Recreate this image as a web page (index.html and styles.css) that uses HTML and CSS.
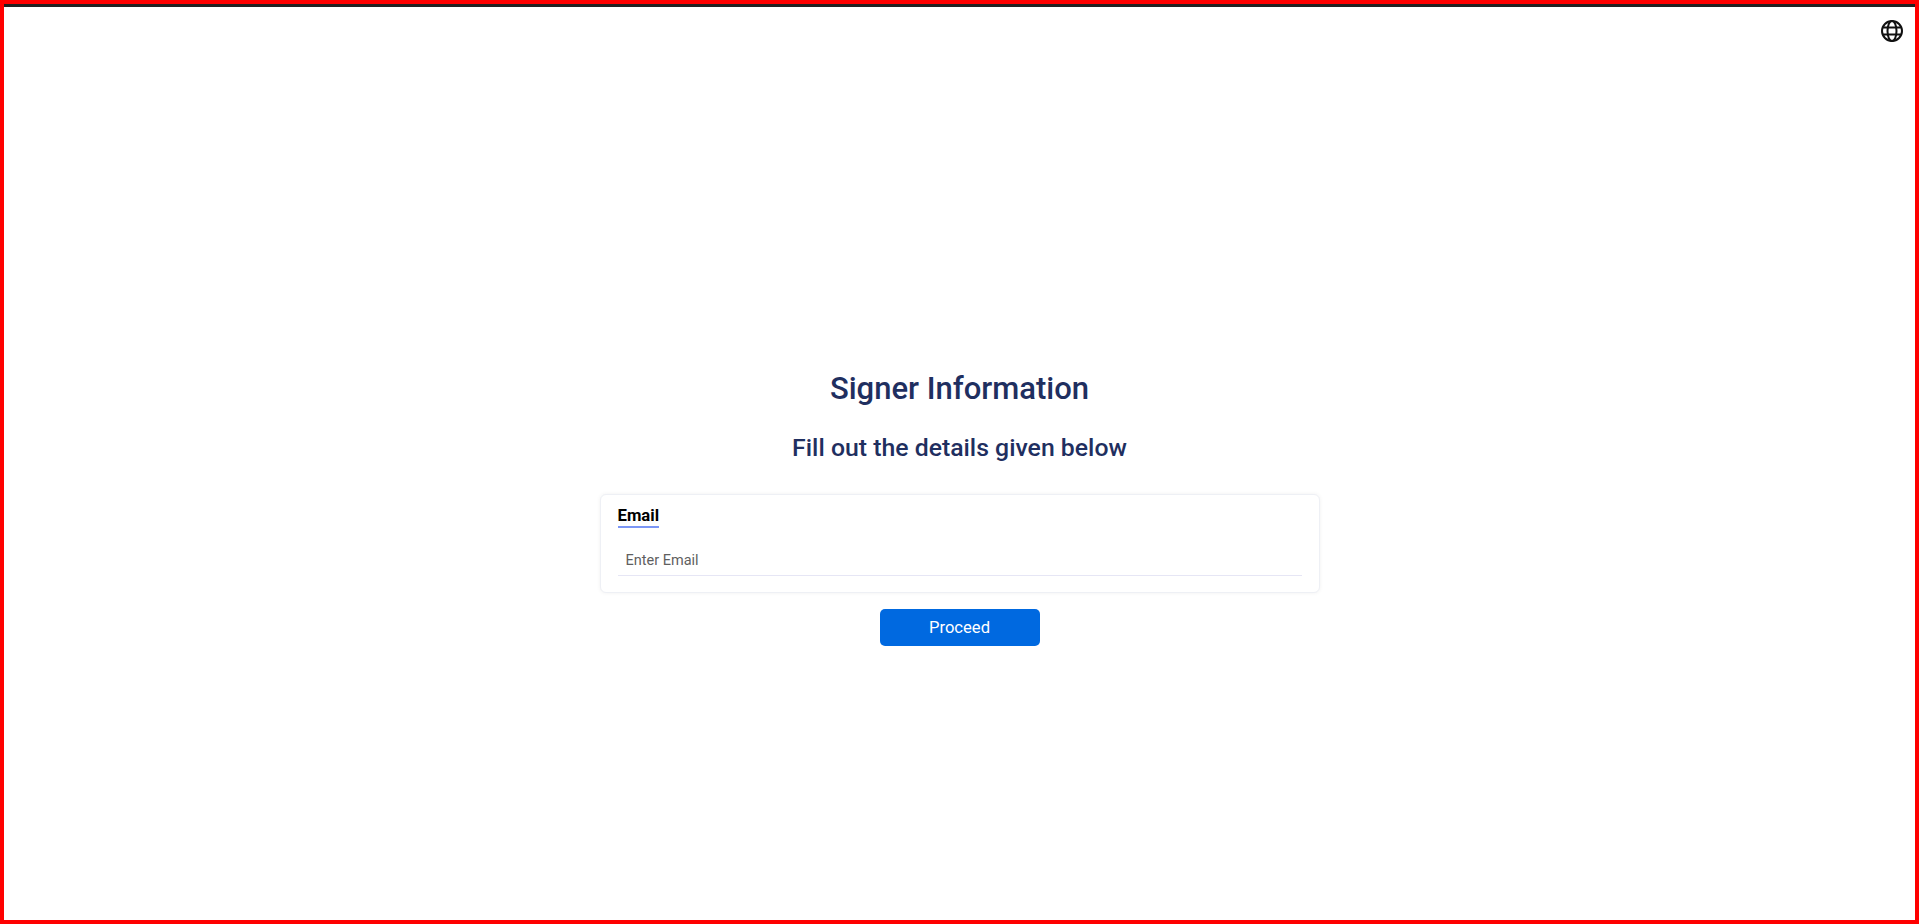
FILE: index.html
```html
<!DOCTYPE html>
<html lang="en">
<head>
    <meta charset="UTF-8">
    <meta name="viewport" content="width=device-width, initial-scale=1.0">
    <title>Signer Information</title>
    <link rel="stylesheet" href="styles.css">
</head>
<body>
    <div class="frame">
        <button type="button" class="lang-btn" aria-label="Language">
            <svg width="24" height="24" viewBox="0 0 24 24" fill="none" stroke="#111" stroke-width="2">
                <circle cx="12" cy="12" r="10"/>
                <ellipse cx="12" cy="12" rx="4.5" ry="10"/>
                <path d="M3 8.5h18M3 15.5h18"/>
            </svg>
        </button>

        <div class="container">
            <h1>Signer Information</h1>
            <h2>Fill out the details given below</h2>

            <form class="card">
                <label for="email">Email</label>
                <input type="text" id="email" name="email" placeholder="Enter Email">
            </form>

            <button type="submit" class="proceed">Proceed</button>
        </div>
    </div>
</body>
</html>
```

FILE: styles.css
```css
* {
    margin: 0;
    padding: 0;
    box-sizing: border-box;
}

body {
    font-family: Roboto, Arial, sans-serif;
    background: white;
}

.frame {
    position: relative;
    height: 924px;
    border: 4px solid #ff0000;
    display: flex;
    justify-content: center;
    overflow: hidden;
}

.frame::before {
    content: "";
    position: absolute;
    top: 0;
    left: 0;
    right: 0;
    height: 3px;
    background: #222;
}

.lang-btn {
    position: absolute;
    top: 15px;
    right: 11px;
    width: 24px;
    height: 24px;
    display: flex;
    align-items: center;
    justify-content: center;
    background: none;
    border: none;
}

.container {
    width: 720px;
    padding-top: 365px;
    display: flex;
    flex-direction: column;
    align-items: center;
}

h1 {
    color: #1f2f60;
    font-size: 31px;
    font-weight: 500;
    line-height: 40px;
    margin-bottom: 23px;
}

h2 {
    color: #1f2f60;
    font-size: 24.8px;
    font-weight: 500;
    line-height: 32px;
    margin-bottom: 30px;
}

.card {
    width: 720px;
    height: 99px;
    padding: 11px 17px;
    background: white;
    border: 1px solid #eef0f5;
    border-radius: 6px;
    box-shadow: 0 0 4px rgba(0,0,0,0.06);
    margin-bottom: 16px;
}

label {
    display: table;
    color: black;
    font-size: 16.7px;
    font-weight: 700;
    line-height: 20px;
    border-bottom: 2px solid #7b96f5;
    margin-bottom: 13px;
}

input {
    width: 100%;
    height: 35px;
    padding: 4px 8px 0;
    border: none;
    border-bottom: 1px solid #e6e6f5;
    font-family: Roboto, Arial, sans-serif;
    font-size: 14.5px;
    outline: none;
}

input::placeholder {
    color: #5f5f5f;
    opacity: 1;
}

.proceed {
    width: 160px;
    height: 37px;
    background: #0069e0;
    color: white;
    border: none;
    border-radius: 5px;
    font-family: Roboto, Arial, sans-serif;
    font-size: 16.6px;
}
```
